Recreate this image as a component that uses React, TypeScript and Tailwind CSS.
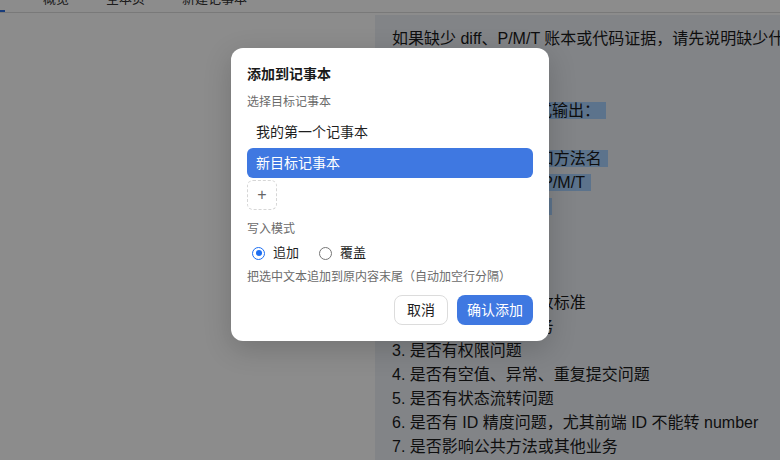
import { useState } from "react";

const font = "font-['Liberation_Sans','Noto_Sans_CJK_SC',sans-serif]";

type Line = { text: string; sel?: boolean; pad?: string };

// note panel content (selection is drawn as a span highlight)
const lines: Line[] = [
  { text: "如果缺少 diff、P/M/T 账本或代码证据，请先说明缺少什么，不要直接下结论。" },
  { text: "不要凭空猜测。" },
  { text: "" },
  { text: "最终结论请按以下格式输出：", sel: true },
  { text: "", sel: true },
  { text: "1. 涉及的文件、类名和方法名", sel: true },
  { text: "2. 关联账本中的条目 P/M/T", sel: true },
  { text: "3. 风险等级及其原因", sel: true, pad: "pr-[14px]" },
  { text: "" },
  { text: "审查时重点检查：" },
  { text: "" },
  { text: "1. 是否符合需求与验收标准" },
  { text: "2. 是否会影响现有业务" },
  { text: "3. 是否有权限问题" },
  { text: "4. 是否有空值、异常、重复提交问题" },
  { text: "5. 是否有状态流转问题" },
  { text: "6. 是否有 ID 精度问题，尤其前端 ID 不能转 number" },
  { text: "7. 是否影响公共方法或其他业务" },
];

const notebooks = ["我的第一个记事本", "新目标记事本"];

function Radio({ checked, label, className = "" }: { checked: boolean; label: string; className?: string }) {
  return (
    <label className={`flex items-center ${className}`}>
      {checked ? (
        <span className="ml-[5px] flex h-[13px] w-[13px] items-center justify-center rounded-full border-[1.5px] border-[#1c6ef2] bg-white">
          <span className="h-[6px] w-[6px] rounded-full bg-[#1c6ef2]" />
        </span>
      ) : (
        <span className="ml-[5px] h-[13px] w-[13px] rounded-full border border-[#767676] bg-white" />
      )}
      <span className="ml-2 text-[13px] leading-5 text-[#1f1f1f]">{label}</span>
    </label>
  );
}

export default function App() {
  const [active] = useState(1);

  return (
    <div className={`relative h-[460px] w-[780px] overflow-hidden bg-white ${font}`}>
      {/* Top tabs (scrolled, only the bottom edge shows) */}
      <div className="relative h-[13px] overflow-hidden border-b border-[#dcdcdc]">
        <div className="-mt-[9px] flex text-[13px] leading-4 text-[#333]">
          <span className="ml-[43px]">概览</span>
          <span className="ml-[37px]">全本页</span>
          <span className="ml-[37px]">新建记事本</span>
        </div>
        <span className="absolute bottom-0 left-0 h-[2px] w-[5px] bg-[#2f6fe0]" />
      </div>

      <div className="flex">
        <div className="w-[375px] shrink-0" />

        {/* Note panel */}
        <div className="mt-[2px] h-[460px] flex-1 bg-[#edf0f6] px-[17px] pt-3 text-[16px] leading-6 text-[#1a1a1a]">
          {lines.map((l, i) => (
            <div key={i} className="h-6 whitespace-nowrap">
              {l.sel ? (
                <span className={`bg-[#a8d1ff] ${l.pad ?? "pr-[6px]"}`}>{l.text || "\u00a0"}</span>
              ) : (
                l.text
              )}
            </div>
          ))}
        </div>
      </div>

      {/* Dialog overlay */}
      <div className="absolute inset-0 flex items-start justify-center bg-black/45 pt-12">
        <div className="w-[318px] rounded-xl bg-white p-4 shadow-[0_8px_28px_rgba(0,0,0,0.18)]">
          <h3 className="text-[14px] font-bold leading-5 text-[#1a1a1a]">添加到记事本</h3>
          <div className="mt-[10px] text-[12px] leading-4 text-[#6b6b6b]">选择目标记事本</div>

          <div className="mt-[7px] flex flex-col gap-px">
            {notebooks.map((n, i) => (
              <div
                key={n}
                className={`flex h-[30px] items-center rounded-md pl-[9px] text-[14px] ${
                  i === active ? "bg-[#3f78e1] text-white" : "text-[#1f1f1f]"
                }`}
              >
                {n}
              </div>
            ))}
          </div>

          <button className="mt-[2px] flex h-[30px] w-[30px] items-center justify-center rounded-md border border-dashed border-[#d6d6d6] text-[16px] leading-none text-[#666]">
            +
          </button>

          <div className="mt-[11px] text-[12px] leading-4 text-[#6b6b6b]">写入模式</div>
          <div className="mt-[6px] flex h-5 items-center">
            <Radio checked label="追加" />
            <Radio checked={false} label="覆盖" className="ml-[15px]" />
          </div>
          <div className="mt-[6px] text-[12px] leading-4 text-[#6b6b6b]">把选中文本追加到原内容末尾（自动加空行分隔）</div>

          <div className="mt-[10px] flex justify-end gap-[9px]">
            <button className="h-[30px] rounded-lg border border-[#dcdcdc] bg-white px-3 text-[14px] text-[#1f1f1f]">取消</button>
            <button className="h-[30px] rounded-lg bg-[#3f78e1] px-[10px] text-[14px] text-white">确认添加</button>
          </div>
        </div>
      </div>
    </div>
  );
}
